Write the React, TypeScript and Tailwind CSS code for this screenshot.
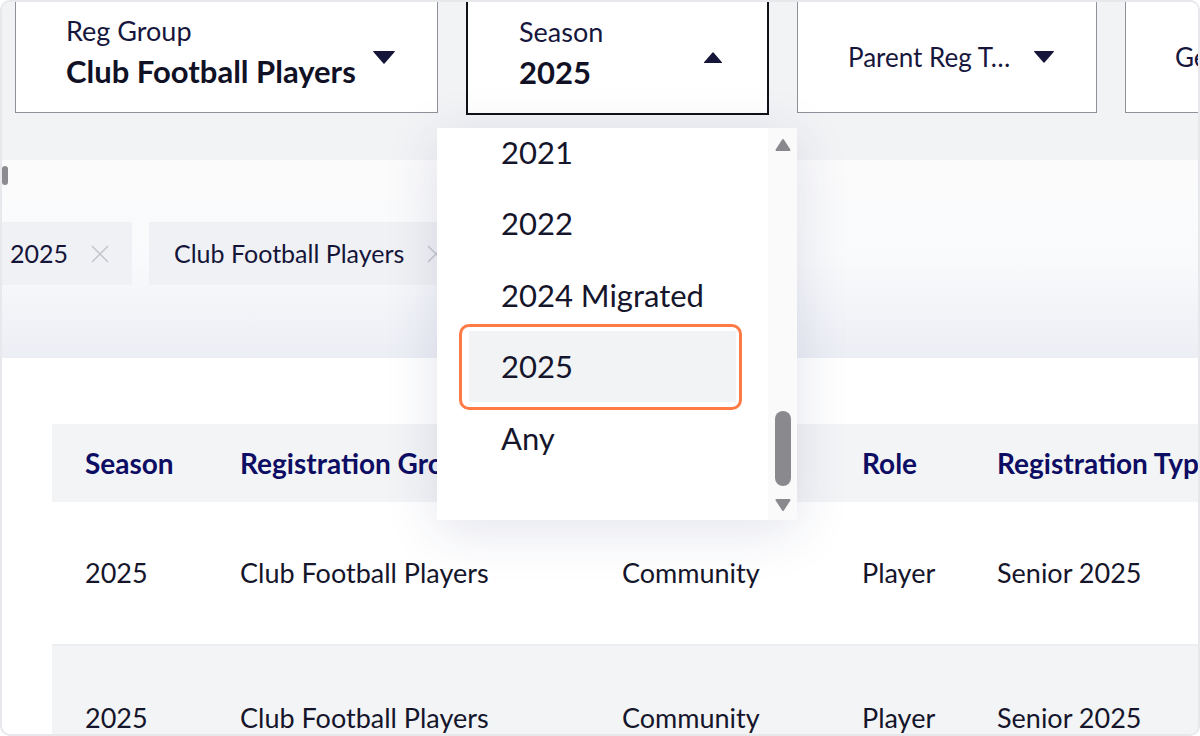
import React from "react";

// small drawn bits
const Caret = ({ up = false, w = 24, h = 13 }: { up?: boolean; w?: number; h?: number }) => (
  <svg width={w} height={h} viewBox="0 0 24 13" className="shrink-0">
    {up ? (
      <path d="M2 12.5 L12 1 L22 12.5 Z" fill="#16163a" stroke="#16163a" strokeWidth="1.5" strokeLinejoin="round" />
    ) : (
      <path d="M2 0.5 L22 0.5 L12 12 Z" fill="#16163a" stroke="#16163a" strokeWidth="1.5" strokeLinejoin="round" />
    )}
  </svg>
);

const ScrollArrow = ({ up = false }: { up?: boolean }) => (
  <svg width="16" height="13" viewBox="0 0 16 13">
    {up ? (
      <path d="M1.5 12 L8 2 L14.5 12 Z" fill="#8a8a8e" stroke="#8a8a8e" strokeWidth="2" strokeLinejoin="round" />
    ) : (
      <path d="M1.5 1 L14.5 1 L8 11 Z" fill="#8a8a8e" stroke="#8a8a8e" strokeWidth="2" strokeLinejoin="round" />
    )}
  </svg>
);

const Cross = () => (
  <svg width="18" height="18" viewBox="0 0 18 18" className="shrink-0">
    <path d="M1 1 L17 17 M17 1 L1 17" stroke="#c6c7ce" strokeWidth="1.6" />
  </svg>
);

const columns = [
  { label: "Season", w: "w-[155px]" },
  { label: "Registration Group", w: "w-[382px]" },
  { label: "Club Type", w: "w-[240px]" },
  { label: "Role", w: "w-[135px]" },
  { label: "Registration Type", w: "w-[300px]" },
];

const rows = [
  ["2025", "Club Football Players", "Community", "Player", "Senior 2025"],
  ["2025", "Club Football Players", "Community", "Player", "Senior 2025"],
];

const options = ["2021", "2022", "2024 Migrated", "2025", "Any"];

export default function App() {
  return (
    <div className="w-[1200px] h-[736px] bg-white">
      <div className="relative h-full overflow-hidden rounded-[10px] border-2 border-[#e7e8ec] bg-white font-['Lato','Noto_Sans',sans-serif]">
        {/* FILTER BOXES */}
        <div className="flex h-[158px] items-start gap-[28px] overflow-hidden bg-[#f2f3f5] pl-[13px]">
          <div className="flex h-[111px] w-[423px] shrink-0 items-center justify-between border border-t-0 border-[#8f9099] bg-white pb-[10px] pl-[50px] pr-[41px]">
            <div className="flex flex-col">
              <span className="text-[27px] leading-[32px] text-[#17173d]">Reg Group</span>
              <span className="mt-[6px] whitespace-nowrap text-[31px] font-bold leading-[36px] text-[#111126]">Club Football Players</span>
            </div>
            <div className="mt-[10px]">
              <Caret />
            </div>
          </div>

          <div className="flex h-[113px] w-[303px] shrink-0 items-center justify-between border-2 border-t-0 border-[#111118] bg-white pb-[10px] pl-[51px] pr-[43px]">
            <div className="flex flex-col">
              <span className="text-[27px] leading-[32px] text-[#17173d]">Season</span>
              <span className="mt-[6px] text-[31px] font-bold leading-[36px] text-[#111126]">2025</span>
            </div>
            <div className="mt-[10px]">
              <Caret up w={22} h={11} />
            </div>
          </div>

          <div className="flex h-[111px] w-[300px] shrink-0 items-center gap-[17px] border border-t-0 border-[#8f9099] bg-white pl-[50px] pr-[41px]">
            <span className="truncate text-[26px] text-[#17173d]">Parent Reg Type</span>
            <Caret w={22} h={12} />
          </div>

          <div className="flex h-[111px] w-[300px] shrink-0 items-center border border-t-0 border-[#8f9099] bg-white pl-[49px]">
            <span className="text-[26px] text-[#17173d]">Gender</span>
          </div>
        </div>

        {/* CHIPS PANEL */}
        <div className="relative h-[198px] bg-gradient-to-b from-[#fbfbfc] via-[#f9fafb] to-[#eceef5] pt-[62px]">
          <div className="absolute left-0 top-[6px] h-[19px] w-[6px] rounded-full bg-[#8c8c90]" />
          <div className="-ml-[17px] flex gap-[17px]">
            <div className="flex h-[63px] items-center gap-[23px] bg-[#f0f1f4] pl-[25px] pr-[23px]">
              <span className="text-[25px] text-[#15153a]">2025</span>
              <Cross />
            </div>
            <div className="flex h-[63px] items-center gap-[23px] bg-[#f0f1f4] pl-[25px] pr-[23px]">
              <span className="text-[25px] text-[#15153a]">Club Football Players</span>
              <Cross />
            </div>
          </div>
        </div>

        {/* TABLE */}
        <div className="overflow-hidden pl-[50px] pt-[66px]">
          <div className="flex h-[78px] w-[1200px] items-center bg-[#f3f4f6]">
            {columns.map((c) => (
              <div key={c.label} className={`${c.w} shrink-0 whitespace-nowrap pl-[33px] text-[28px] font-bold text-[#0d0d63]`}>
                {c.label}
              </div>
            ))}
          </div>
          {rows.map((r, i) => (
            <div
              key={i}
              className={`flex h-[144px] w-[1200px] items-center ${i === 0 ? "border-b-2 border-[#eceef1] bg-white" : "bg-[#f3f4f6]"}`}
            >
              {r.map((v, j) => (
                <div key={j} className={`${columns[j].w} shrink-0 whitespace-nowrap pl-[33px] text-[27px] text-[#15152b]`}>
                  {v}
                </div>
              ))}
            </div>
          ))}
        </div>

        {/* SEASON DROPDOWN */}
        <div className="absolute left-[435px] top-[126px] flex h-[392px] w-[360px] bg-white shadow-[0_10px_50px_rgba(40,50,110,0.13)]">
          <div className="w-[331px] overflow-hidden px-[32px]">
            <div className="-mt-[12px] flex flex-col">
              {options.map((o) => (
                <div
                  key={o}
                  className={`relative flex h-[71.5px] items-center pl-[32px] text-[31px] text-[#15152b] ${o === "2025" ? "bg-[#f2f3f5]" : ""}`}
                >
                  {o}
                  {o === "2025" && (
                    <div className="absolute -bottom-[8px] -left-[10px] -right-[6px] -top-[7px] rounded-[10px] border-[3px] border-[#ff7a45]" />
                  )}
                </div>
              ))}
            </div>
          </div>
          <div className="flex w-[29px] flex-col items-center bg-[#fafafa] pb-[8px] pt-[10px]">
            <ScrollArrow up />
            <div className="mt-auto h-[75px] w-[16px] rounded-full bg-[#8a8a8e]" />
            <div className="mt-[13px]">
              <ScrollArrow />
            </div>
          </div>
        </div>
      </div>
    </div>
  );
}
